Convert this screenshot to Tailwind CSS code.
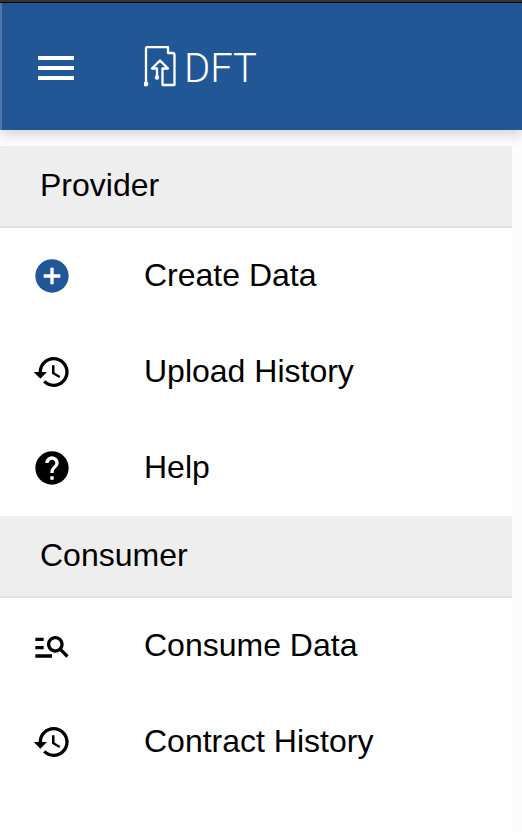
<!DOCTYPE html>
<html lang="en">
<head>
<meta charset="utf-8">
<meta name="viewport" content="width=device-width, initial-scale=1">
<title>DFT</title>
<script src="https://cdn.jsdelivr.net/npm/@tailwindcss/browser@4"></script>
</head>
<body class="min-h-screen bg-[#fcfcfc] font-['Liberation_Sans',Arial,sans-serif] text-[32px] leading-10 text-black">
<div class="flex min-h-screen flex-col">
  <div class="h-[3px] shrink-0 border-b border-black bg-[#363636]"></div>
  <header class="relative z-10 flex h-[127px] shrink-0 items-center gap-16 border-l-2 border-white/20 bg-[#225797] pt-[3px] pr-8 pl-[30px] shadow-[0_4px_14px_rgba(0,0,0,0.2)]">
    <button type="button" aria-label="Toggle menu" class="shrink-0">
      <svg class="size-12 fill-white" viewBox="0 0 24 24"><path d="M3 18h18v-2H3v2zm0-5h18v-2H3v2zm0-7v2h18V6H3z"/></svg>
    </button>
    <a href="#" class="flex items-center gap-1 text-white">
      <svg class="h-11 w-9 fill-none stroke-white" viewBox="0 0 36 44" stroke-width="2.300" stroke-linejoin="round" stroke-linecap="round" aria-hidden="true">
        <path d="M2 38V2.500q0-1.500 1.500-1.500H24V7H28.500q2 0 2 2V39H18.500V22.500H24L16 14.500L8 22.500H13V31"/>
        <circle cx="2" cy="38" r="1.300" fill="white"/><circle cx="13" cy="31.500" r="1.100" fill="white"/>
      </svg>
      <span class="pt-0.5 font-['Roboto',sans-serif] text-[40px] font-light">DFT</span>
    </a>
  </header>
  <nav aria-label="Main" class="mr-2.5 grow bg-white pt-4">
    <h2 class="border-b-2 border-[#e0e0e0] bg-[#eeeeee] px-10 pt-[19px] pb-[21px]">Provider</h2>
    <ul>
      <li><a href="#" class="flex h-24 items-center gap-[72px] px-8">
        <svg class="size-10 shrink-0 fill-[#225797]" viewBox="0 0 24 24" aria-hidden="true"><path d="M12 2C6.48 2 2 6.48 2 12s4.48 10 10 10 10-4.480 10-10S17.520 2 12 2zm5 11h-4v4h-2v-4H7v-2h4V7h2v4h4v2z"/></svg>
        <span class="pb-0.5">Create Data</span></a></li>
      <li><a href="#" class="flex h-24 items-center gap-[72px] px-8">
        <svg class="size-10 shrink-0" viewBox="0 0 24 24" aria-hidden="true"><path d="M13 3c-4.970 0-9 4.030-9 9H1l3.890 3.890.07.14L9 12H6c0-3.870 3.130-7 7-7s7 3.130 7 7-3.130 7-7 7c-1.930 0-3.680-.79-4.940-2.060l-1.420 1.420C8.270 19.990 10.510 21 13 21c4.970 0 9-4.030 9-9s-4.030-9-9-9zm-1 5v5l4.280 2.540.72-1.210-3.500-2.080V8H12z"/></svg>
        <span class="pb-0.5">Upload History</span></a></li>
      <li><a href="#" class="flex h-24 items-center gap-[72px] px-8">
        <svg class="size-10 shrink-0" viewBox="0 0 24 24" aria-hidden="true"><path d="M12 2C6.480 2 2 6.480 2 12s4.480 10 10 10 10-4.480 10-10S17.520 2 12 2zm1 17h-2v-2h2v2zm2.070-7.750-.9.920C13.450 12.900 13 13.500 13 15h-2v-.5c0-1.100.45-2.100 1.170-2.830l1.240-1.260c.37-.36.59-.86.59-1.410 0-1.100-.9-2-2-2s-2 .9-2 2H8c0-2.210 1.790-4 4-4s4 1.790 4 4c0 .88-.36 1.680-.93 2.250z"/></svg>
        <span class="pb-0.5">Help</span></a></li>
    </ul>
    <h2 class="border-b-2 border-[#e0e0e0] bg-[#eeeeee] px-10 pt-[19px] pb-[21px]">Consumer</h2>
    <ul>
      <li><a href="#" class="flex h-24 items-center gap-[72px] px-8">
        <svg class="size-10 shrink-0" viewBox="0 0 24 24" aria-hidden="true"><path d="M7 9H2V7h5v2zm0 3H2v2h5v-2zm13.590 7-3.830-3.830c-.8.520-1.740.830-2.760.830-2.760 0-5-2.240-5-5s2.240-5 5-5 5 2.240 5 5c0 1.020-.31 1.960-.83 2.750L22 17.590 20.590 19zM17 11c0-1.650-1.350-3-3-3s-3 1.350-3 3 1.350 3 3 3 3-1.350 3-3zM2 19h10v-2H2v2z"/></svg>
        <span class="pb-0.5">Consume Data</span></a></li>
      <li><a href="#" class="flex h-24 items-center gap-[72px] px-8">
        <svg class="size-10 shrink-0" viewBox="0 0 24 24" aria-hidden="true"><path d="M13 3c-4.970 0-9 4.030-9 9H1l3.890 3.890.07.14L9 12H6c0-3.870 3.130-7 7-7s7 3.130 7 7-3.130 7-7 7c-1.930 0-3.680-.79-4.940-2.060l-1.420 1.420C8.270 19.990 10.510 21 13 21c4.970 0 9-4.030 9-9s-4.030-9-9-9zm-1 5v5l4.280 2.540.72-1.210-3.500-2.080V8H12z"/></svg>
        <span class="pb-0.5">Contract History</span></a></li>
    </ul>
  </nav>
</div>
</body>
</html>
